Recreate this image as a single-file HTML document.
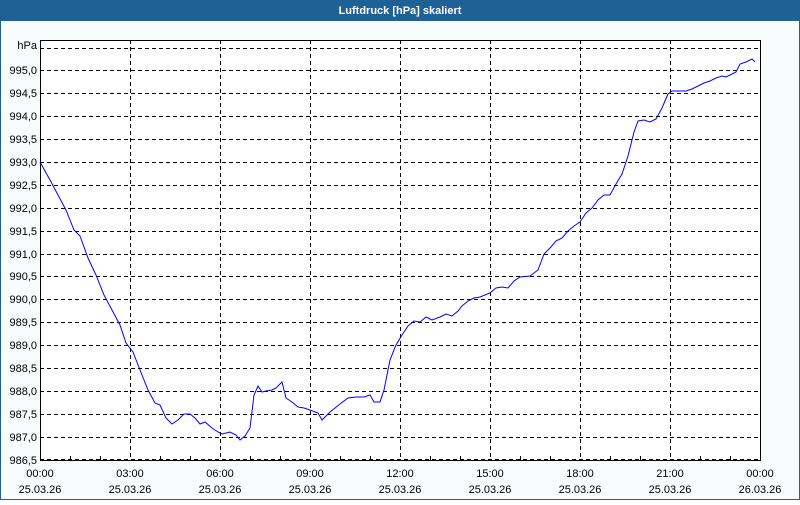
<!DOCTYPE html>
<html><head><style>
body{margin:0;width:800px;height:500px;overflow:hidden;background:#fff;font-family:"Liberation Sans","DejaVu Sans",sans-serif;}
</style></head><body>
<svg width="800" height="500" xmlns="http://www.w3.org/2000/svg" font-family="Liberation Sans, DejaVu Sans, sans-serif" font-size="11">
<rect x="0" y="0" width="800" height="500" fill="#1f6096"/>
<rect x="1" y="21" width="798" height="478" fill="#f8fcfc"/>
<text x="400" y="14" fill="#fff" font-weight="bold" text-anchor="middle" font-size="11">Luftdruck [hPa] skaliert</text>
<rect x="40.5" y="40.5" width="720" height="420" fill="#fff" stroke="#000"/>
<g stroke="#000" stroke-dasharray="4,3" stroke-width="1">
<line x1="40" y1="48.5" x2="760" y2="48.5"/>
<line x1="40" y1="70.5" x2="760" y2="70.5"/>
<line x1="40" y1="93.5" x2="760" y2="93.5"/>
<line x1="40" y1="116.5" x2="760" y2="116.5"/>
<line x1="40" y1="139.5" x2="760" y2="139.5"/>
<line x1="40" y1="162.5" x2="760" y2="162.5"/>
<line x1="40" y1="185.5" x2="760" y2="185.5"/>
<line x1="40" y1="208.5" x2="760" y2="208.5"/>
<line x1="40" y1="231.5" x2="760" y2="231.5"/>
<line x1="40" y1="254.5" x2="760" y2="254.5"/>
<line x1="40" y1="276.5" x2="760" y2="276.5"/>
<line x1="40" y1="299.5" x2="760" y2="299.5"/>
<line x1="40" y1="322.5" x2="760" y2="322.5"/>
<line x1="40" y1="345.5" x2="760" y2="345.5"/>
<line x1="40" y1="368.5" x2="760" y2="368.5"/>
<line x1="40" y1="391.5" x2="760" y2="391.5"/>
<line x1="40" y1="414.5" x2="760" y2="414.5"/>
<line x1="40" y1="437.5" x2="760" y2="437.5"/>
<line x1="40" y1="459.5" x2="760" y2="459.5"/>
<line x1="130.5" y1="40" x2="130.5" y2="460"/>
<line x1="220.5" y1="40" x2="220.5" y2="460"/>
<line x1="310.5" y1="40" x2="310.5" y2="460"/>
<line x1="400.5" y1="40" x2="400.5" y2="460"/>
<line x1="490.5" y1="40" x2="490.5" y2="460"/>
<line x1="580.5" y1="40" x2="580.5" y2="460"/>
<line x1="670.5" y1="40" x2="670.5" y2="460"/>
</g>
<g stroke="#000">
<path d="M70.5 456V460M100.5 456V460M160.5 456V460M190.5 456V460M250.5 456V460M280.5 456V460M340.5 456V460M370.5 456V460M430.5 456V460M460.5 456V460M520.5 456V460M550.5 456V460M610.5 456V460M640.5 456V460M700.5 456V460M730.5 456V460"/>
</g>
<polyline fill="none" stroke="#0000ff" stroke-width="1" points="40,162 50,180 58,195 66,210 74,230 80,236 88,258 96,275 104,295 112,310 120,325 126,343 133,352 140,370 148,390 155,403 160,405 166,418 172,424 178,420 184,414 190,414 195,418 200,424 205,422 212,428 218,432 222,434 230,432 236,435 240,440 245,436 250,428 254,395 258,386 262,392 266,391 272,390 276,388 282,382 286,398 292,402 298,407 304,408 310,410 318,413 322,420 330,412 340,404 348,398 356,397 364,397 370,395 374,402 380,402 384,390 390,360 396,345 402,335 408,326 414,321 420,322 426,317 432,320 440,317 446,314 452,316 458,311 462,306 468,301 474,298 480,297 490,293 496,288 502,287 508,288 514,281 520,277 530,276 538,270 544,254 550,248 556,241 562,238 568,231 574,226 580,222 586,213 592,208 598,200 604,195 610,195 616,184 622,174 628,156 634,132 638,121 644,120 650,122 656,119 662,108 668,94 672,91 680,91 686,91 692,89 698,86 704,83 710,81 716,78 722,76 726,77 732,74 736,72 740,64 746,62 752,59 755,62"/>
<g fill="#000" text-anchor="end">
<text x="37" y="49">hPa</text>
<text x="37" y="74">995,0</text>
<text x="37" y="97">994,5</text>
<text x="37" y="120">994,0</text>
<text x="37" y="143">993,5</text>
<text x="37" y="166">993,0</text>
<text x="37" y="189">992,5</text>
<text x="37" y="212">992,0</text>
<text x="37" y="235">991,5</text>
<text x="37" y="258">991,0</text>
<text x="37" y="280">990,5</text>
<text x="37" y="303">990,0</text>
<text x="37" y="326">989,5</text>
<text x="37" y="349">989,0</text>
<text x="37" y="372">988,5</text>
<text x="37" y="395">988,0</text>
<text x="37" y="418">987,5</text>
<text x="37" y="441">987,0</text>
<text x="37" y="464">986,5</text>
</g>
<g fill="#000" text-anchor="middle">
<text x="40" y="477">00:00</text><text x="40" y="493">25.03.26</text>
<text x="130" y="477">03:00</text><text x="130" y="493">25.03.26</text>
<text x="220" y="477">06:00</text><text x="220" y="493">25.03.26</text>
<text x="310" y="477">09:00</text><text x="310" y="493">25.03.26</text>
<text x="400" y="477">12:00</text><text x="400" y="493">25.03.26</text>
<text x="490" y="477">15:00</text><text x="490" y="493">25.03.26</text>
<text x="580" y="477">18:00</text><text x="580" y="493">25.03.26</text>
<text x="670" y="477">21:00</text><text x="670" y="493">25.03.26</text>
<text x="760" y="477">00:00</text><text x="760" y="493">26.03.26</text>
</g>
</svg>
</body></html>
